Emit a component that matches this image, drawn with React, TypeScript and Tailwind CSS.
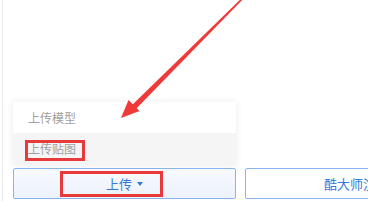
import React from "react";

export default function App() {
  const cjk = { fontFamily: '"Noto Sans CJK SC", "Noto Sans", sans-serif' };
  return (
    <div className="relative w-[368px] h-[201px] overflow-hidden bg-white" style={cjk}>
      <div className="absolute left-[2px] top-0 h-full w-px bg-[#ececec]" />
      <div className="flex flex-col pl-[13px] pt-[102px]">
        <div className="w-[223px] flex flex-col shadow-[0_0_8px_rgba(0,0,0,0.08)]">
          <div className="h-[31px] bg-white flex items-center pl-[15px] text-[12px] text-[#a0a0a0]">上传模型</div>
          <div className="h-[32px] bg-[#f5f5f5] flex items-center pl-[15px] text-[12px] text-[#a0a0a0]">上传贴图</div>
        </div>
        <div className="mt-[3px] flex gap-[9px]">
          <div className="w-[223px] h-[31px] shrink-0 rounded-[2px] border border-[#8ab4ee] bg-gradient-to-b from-[#f7f9fe] to-[#edf2fb] flex items-center justify-center text-[13px] text-[#3478d8]">
            <span>上传</span>
            <span className="ml-[5px] inline-block w-0 h-0 border-l-[3px] border-r-[3px] border-t-[4px] border-l-transparent border-r-transparent border-t-[#3478d8]" />
          </div>
          <div className="w-[223px] h-[31px] shrink-0 rounded-[2px] border border-[#8ab4ee] bg-white flex items-center justify-center text-[13px] text-[#3478d8] whitespace-nowrap">
            酷大师渲染
          </div>
        </div>
      </div>
      <div className="absolute left-[25px] top-[140px] w-[60px] h-[21px] border-[3px] border-[#e8393b]" />
      <div className="absolute left-[60px] top-[171px] w-[103px] h-[26px] border-[3px] border-[#e8393b]" />
      <svg className="absolute left-0 top-0" width="368" height="201" viewBox="0 0 368 201">
        <polygon points="242.4,-2.6 243.6,-1.4 135.4,109.4 131.6,105.6" fill="#f03a3a" />
        <polygon points="121,118 139.5,111 128.5,100" fill="#f03a3a" />
      </svg>
    </div>
  );
}
